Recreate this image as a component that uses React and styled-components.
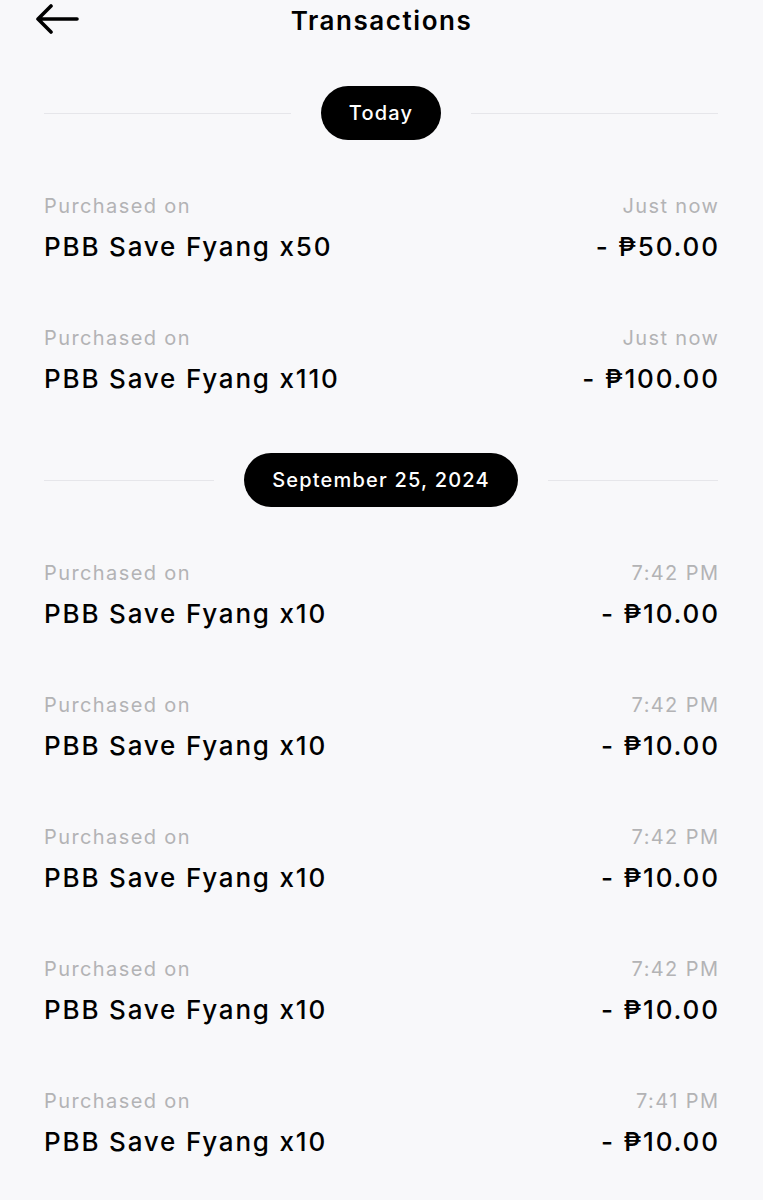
import React from 'react';
import styled, { createGlobalStyle } from 'styled-components';

const sections = [
  {
    label: 'Today',
    items: [
      { name: 'PBB Save Fyang x50', time: 'Just now', amount: '50.00' },
      { name: 'PBB Save Fyang x110', time: 'Just now', amount: '100.00' },
    ],
  },
  {
    label: 'September 25, 2024',
    items: [
      { name: 'PBB Save Fyang x10', time: '7:42 PM', amount: '10.00' },
      { name: 'PBB Save Fyang x10', time: '7:42 PM', amount: '10.00' },
      { name: 'PBB Save Fyang x10', time: '7:42 PM', amount: '10.00' },
      { name: 'PBB Save Fyang x10', time: '7:42 PM', amount: '10.00' },
      { name: 'PBB Save Fyang x10', time: '7:41 PM', amount: '10.00' },
    ],
  },
];

const App = () => {
  return (
    <Page>
      <GlobalStyle />
      <Header>
        <BackButton aria-label="Back">
          <svg width="44" height="30" viewBox="0 0 44 30" fill="none">
            <path d="M42 15H4M16 2L3 15l13 13" stroke="#000" strokeWidth="3.6" strokeLinecap="round" strokeLinejoin="round" />
          </svg>
        </BackButton>
        <Title>Transactions</Title>
      </Header>

      <Body>
        {sections.map((section) => (
          <Section key={section.label}>
            <DateDivider>
              <Line />
              <Pill>{section.label}</Pill>
              <Line />
            </DateDivider>
            <List>
              {section.items.map((item, i) => (
                <Row key={i}>
                  <Meta>
                    <span>Purchased on</span>
                    <End>{item.time}</End>
                  </Meta>
                  <Main>
                    <span>{item.name}</span>
                    <End>- ₱{item.amount}</End>
                  </Main>
                </Row>
              ))}
            </List>
          </Section>
        ))}
      </Body>
    </Page>
  );
};

export default App;

// CSS

const GlobalStyle = createGlobalStyle`
  html, body {
    margin: 0;
    padding: 0;
    background: #f8f8fa;
  }
  body {
    font-family: Inter, "Noto Sans", "DejaVu Sans", sans-serif;
    color: #000;
  }
`

const Page = styled.div`
  width: 763px;
  min-height: 1200px;
  background: #f8f8fa;
`

const Header = styled.header`
  position: relative;
  height: 40px;
  display: flex;
  align-items: center;
  justify-content: center;
`

const BackButton = styled.button`
  position: absolute;
  left: 35px;
  top: 4px;
  padding: 0;
  border: none;
  background: none;
  display: flex;
`

const Title = styled.h1`
  margin: 0;
  font-size: 26px;
  font-weight: 600;
  letter-spacing: 0.06em;
`

const Body = styled.main`
  display: flex;
  flex-direction: column;
  gap: 57px;
  padding: 46px 45px 0 44px;
`

const Section = styled.section`
  display: flex;
  flex-direction: column;
  gap: 54px;
`

const DateDivider = styled.div`
  display: flex;
  align-items: center;
  gap: 30px;
`

const Line = styled.div`
  flex: 1;
  height: 1px;
  background: #e6e6ea;
`

const Pill = styled.div`
  height: 54px;
  padding: 0 28px;
  border-radius: 27px;
  background: #000;
  color: #fff;
  display: flex;
  align-items: center;
  font-size: 20px;
  font-weight: 500;
  letter-spacing: 0.06em;
`

const List = styled.div`
  display: flex;
  flex-direction: column;
  gap: 62px;
`

const Row = styled.div`
  display: flex;
  flex-direction: column;
  gap: 12px;
`

const Meta = styled.div`
  display: flex;
  justify-content: space-between;
  font-size: 20px;
  line-height: 24px;
  letter-spacing: 0.07em;
  color: #b3b3b5;
`

const Main = styled.div`
  display: flex;
  justify-content: space-between;
  font-size: 26px;
  line-height: 34px;
  font-weight: 500;
  letter-spacing: 0.07em;
`

const End = styled.span`
  margin-right: -0.07em;
`
